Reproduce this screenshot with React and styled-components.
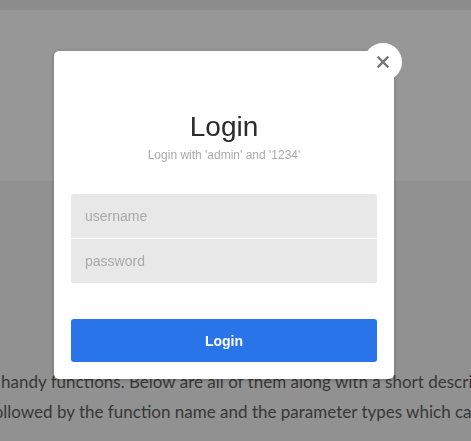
import React from "react"
import styled, { createGlobalStyle } from "styled-components"

const GlobalStyle = createGlobalStyle`
  html, body {
    margin: 0;
    padding: 0;
    height: 100%;
    overflow: hidden;
    background: #f2f2f2;
  }
  * {
    box-sizing: border-box;
  }
`

const Page = styled.div`
  min-height: 100vh;
  background: #f2f2f2;
  font-family: Lato, "Open Sans", sans-serif;
`

const TopBar = styled.div`
  height: 10px;
  background: #ececec;
`

const Hero = styled.div`
  height: 171px;
  background: #fcfcfc;
`

const Content = styled.div`
  padding-top: 186px;
  overflow: hidden;
`

const Line = styled.div`
  white-space: nowrap;
  font-size: 17px;
  line-height: 30px;
  color: #5e5e5e;
  margin-left: ${(p) => -p.shift}px;
`

const Overlay = styled.div`
  position: fixed;
  inset: 0;
  background: rgba(0, 0, 0, 0.4);
`

const Modal = styled.div`
  position: absolute;
  left: 54px;
  top: 51px;
  width: 340px;
  padding: 60px 17px 17px;
  background: #fff;
  border-radius: 5px;
  box-shadow: 0 1px 4px rgba(0, 0, 0, 0.25);
  font-family: "Liberation Sans", Arial, sans-serif;
  text-align: center;
`

const CloseButton = styled.button`
  position: absolute;
  top: -8px;
  right: -8px;
  width: 38px;
  height: 38px;
  border: none;
  border-radius: 50%;
  background: #fff;
  padding: 0;
  display: flex;
  align-items: center;
  justify-content: center;
  cursor: pointer;
`

const Title = styled.h1`
  margin: 0;
  font-size: 28px;
  line-height: 32px;
  font-weight: normal;
  color: #2b2b2b;
`

const Subtitle = styled.p`
  margin: 5px 0 0;
  font-size: 12px;
  line-height: 14px;
  color: #aaaaaa;
`

const Fields = styled.div`
  margin-top: 32px;
  display: flex;
  flex-direction: column;
  gap: 1px;
`

const Input = styled.input`
  display: block;
  width: 100%;
  height: 44px;
  border: none;
  outline: none;
  background: #e8e8e8;
  padding: 0 14px;
  font-family: "Liberation Sans", Arial, sans-serif;
  font-size: 14px;
  color: #333;
  border-radius: ${(p) => (p.first ? "3px 3px 0 0" : "0 0 3px 3px")};
  &::placeholder {
    color: #a9a9a9;
  }
`

const SubmitButton = styled.button`
  display: block;
  width: 100%;
  height: 43px;
  margin-top: 36px;
  border: none;
  border-radius: 3px;
  background: #2a74ea;
  color: #fff;
  font-family: "Liberation Sans", Arial, sans-serif;
  font-size: 14px;
  font-weight: bold;
  cursor: pointer;
`

const App = () => (
  <>
    <GlobalStyle />
    <Page>
      <TopBar />
      <Hero />
      <Content>
        <Line shift={-1}>
          handy functions. Below are all of them along with a short description of
        </Line>
        <Line shift={12}>
          followed by the function name and the parameter types which can be used
        </Line>
      </Content>
    </Page>
    <Overlay>
      <Modal>
        <CloseButton aria-label="close">
          <svg width="12" height="12" viewBox="0 0 12 12">
            <path
              d="M1.5 1.5 L10.5 10.5 M10.5 1.5 L1.5 10.5"
              stroke="#777"
              strokeWidth="2.4"
              strokeLinecap="square"
            />
          </svg>
        </CloseButton>
        <Title>Login</Title>
        <Subtitle>Login with 'admin' and '1234'</Subtitle>
        <Fields>
          <Input first placeholder="username" />
          <Input type="password" placeholder="password" />
        </Fields>
        <SubmitButton>Login</SubmitButton>
      </Modal>
    </Overlay>
  </>
)

export default App
